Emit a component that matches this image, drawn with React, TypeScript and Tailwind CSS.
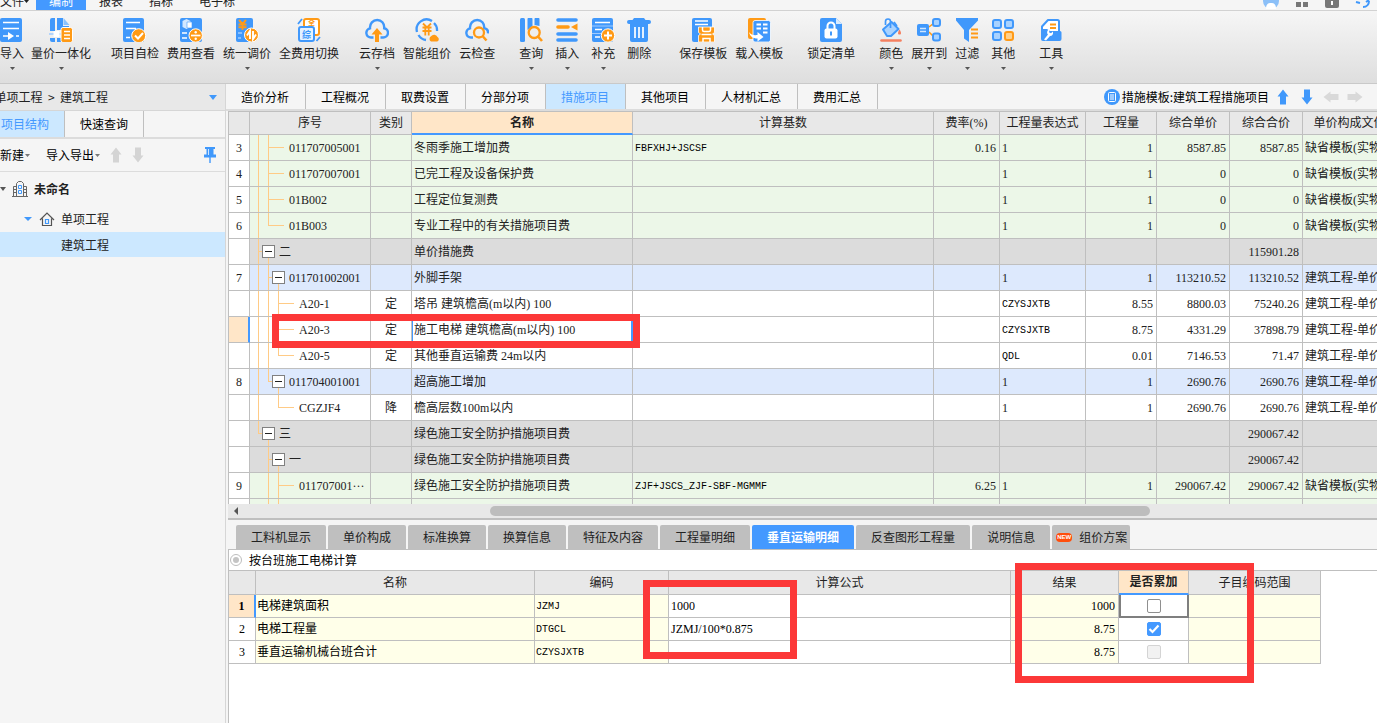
import { useState } from "react";
import type { ReactNode } from "react";
import clsx from "clsx";

const B = "#4098fb";
const O = "#ff9a16";

/* ---------- toolbar icons ---------- */

function Icon({ children }: { children: ReactNode }) {
  return (
    <svg viewBox="0 0 24 24" className="h-6 w-6 shrink-0" fill="none" aria-hidden="true">
      {children}
    </svg>
  );
}

const CLOUD = "M8.5 19.5H6a4.6 4.6 0 0 1-1-9.1C4.6 5.6 8 2 12.2 2s7.4 3.4 7 8.2a4.7 4.7 0 0 1-1.2 9.3h-2.5";

const ICONS: Record<string, ReactNode> = {
  import: (
    <Icon>
      <rect x="0" y="0" width="22" height="24" rx="2" fill={B} />
      <path d="M3 4.5h16M3 10.500h16M3 18h6M16 18h3" stroke="#fff" strokeWidth="1.600" />
      <path d="M8 14l6 4-6 4z" fill="#fff" />
    </Icon>
  ),
  merge: (
    <Icon>
      <path d="M1 2a2 2 0 0 1 2-2h3v13H1zM1 20h5v4H3a2 2 0 0 1-2-2zM8 0h6v8h6v4H8zM8 20h5v4H8z" fill={B} />
      <path d="M14.5 0l6 7h-6z" fill="#8cc3ff" />
      <path d="M0 16h12" stroke="#9fcbff" strokeWidth="1.5" />
      <rect x="4.5" y="13" width="6" height="6" rx="1" fill="#fff" />
      <rect x="12" y="9.5" width="11.5" height="15" rx="2" fill={O} stroke="#fff" />
      <path d="M15 13.5h6M15 17h6M15 20.5h6" stroke="#fff" strokeWidth="1.5" />
    </Icon>
  ),
  check: (
    <Icon>
      <rect x="0" y="0" width="21" height="24" rx="2" fill={B} />
      <path d="M3 4.5h14M3 10.5h10M3 19.5h4" stroke="#fff" strokeWidth="1.6" />
      <circle cx="15.7" cy="17.7" r="7" fill={O} stroke="#fff" />
      <path d="M12 17.5l3 3 5-5.5" stroke="#fff" strokeWidth="2" />
    </Icon>
  ),
  cost: (
    <Icon>
      <rect x="1" y="0" width="22" height="24" rx="2" fill={B} />
      <path d="M3.5 3l4-2 4 2v6l-4 2-4-2z" fill="#d3e8ff" />
      <path d="M8 4h5v6H8z" fill="#fff" stroke={B} strokeWidth=".6" />
      <path d="M3 15h5M3 20h5" stroke="#fff" strokeWidth="1.6" />
      <circle cx="16.7" cy="17.5" r="6.7" fill={O} stroke="#fff" />
      <path d="M12 17.5h9.5" stroke="#fff" strokeWidth="1.7" />
      <circle cx="16.7" cy="14.3" r="1.2" fill="#fff" />
      <circle cx="16.7" cy="20.7" r="1.2" fill="#fff" />
    </Icon>
  ),
  adjust: (
    <Icon>
      <rect x="1" y="0" width="17" height="24" rx="2" fill={B} />
      <path d="M4 2l3.5 4L11 2M7.500 6v6M3.500 6.500h8M3.500 9.300h8" stroke={O} strokeWidth="1.9" />
      <path d="M3 15h4M3 20h3" stroke="#9fcbff" strokeWidth="1.6" />
      <circle cx="16.5" cy="17" r="7" fill={O} stroke="#fff" />
      <path d="M15 21v-8l-3 4.5M18 13v8l3-4.5" stroke="#fff" strokeWidth="1.9" />
    </Icon>
  ),
  swap: (
    <Icon>
      <rect x="7" y="1" width="15" height="16" rx="2" fill="#fff" stroke={O} strokeWidth="2" />
      <text x="14.5" y="7" fontSize="7" fontWeight="700" textAnchor="middle" fill={O} fontFamily="Noto Sans CJK SC, sans-serif">
        全
      </text>
      <path d="M1 6l4-5M19.500 23l3.500-4" stroke={B} strokeWidth="1.8" />
      <rect x="2" y="9" width="15" height="14" rx="2" fill="#e6f2ff" stroke={B} strokeWidth="2" />
      <text x="9.5" y="19.5" fontSize="9" fontWeight="700" textAnchor="middle" fill={B} fontFamily="Noto Sans CJK SC, sans-serif">
        综
      </text>
    </Icon>
  ),
  cloudSave: (
    <Icon>
      <path d={CLOUD} stroke={B} strokeWidth="2.4" />
      <path d="M12 10l5.500 6.500H14V24h-4v-7.500H6.500z" fill={O} />
    </Icon>
  ),
  smart: (
    <Icon>
      <path d="M11 22a10 10 0 0 1-7.500-5M2 14A10 10 0 0 1 17 3M19 5a10 10 0 0 1 3 8" stroke={B} strokeWidth="2.3" />
      <path d="M8 5.500l4 4 4-4M7.500 9.500h9M7.500 13h9M10.300 9.500v8M13.700 9.500v8" stroke={O} strokeWidth="1.8" />
      <path d="M16 23.500a3 3 0 0 1 0-5.200 3.800 3.800 0 0 1 6.500.7c2 1.200 1.500 4.200-.5 4.500z" fill={O} />
    </Icon>
  ),
  cloudCheck: (
    <Icon>
      <path d="M8 19.5H6a4.6 4.6 0 0 1-1-9.1C4.6 5.6 8 2 12.2 2s7.4 3.4 7 8.2c2.600.4 4.100 2.600 3.800 5.300" stroke={B} strokeWidth="2.4" />
      <circle cx="14" cy="14.5" r="5" stroke={O} strokeWidth="2.3" />
      <path d="M17.500 18l4 4.500" stroke={O} strokeWidth="2.5" />
    </Icon>
  ),
  query: (
    <Icon>
      <rect x="1" y="0" width="5" height="24" rx="1.5" fill={B} />
      <path d="M8.500 1.500a1.500 1.500 0 0 1 5 0V8l-5 4zM15.500 1.500a1.500 1.500 0 0 1 5 0V8l-5-1z" fill={B} />
      <circle cx="15.2" cy="14.5" r="5.5" fill="#eee" stroke={O} strokeWidth="2.3" />
      <path d="M19 18.500l4 4.500" stroke={O} strokeWidth="2.6" />
    </Icon>
  ),
  insert: (
    <Icon>
      <path d="M3 2h18M3 16h18M3 22h18" stroke={B} strokeWidth="3.6" strokeLinecap="round" />
      <path d="M3 9h10" stroke={O} strokeWidth="3.6" strokeLinecap="round" />
      <path d="M22.500 5.500v7L16 9z" fill={O} />
    </Icon>
  ),
  supply: (
    <Icon>
      <rect x="1" y="0" width="21" height="24" rx="2" fill={B} />
      <path d="M4 4.500h15M4 11.500h7M4 19h5" stroke="#fff" strokeWidth="1.6" />
      <path d="M1 8h21M1 15.500h9" stroke="#9fcbff" />
      <circle cx="17" cy="17.5" r="6.7" fill={O} stroke="#fff" />
      <path d="M13 17.500h8M17 13.500v8" stroke="#fff" strokeWidth="2" />
    </Icon>
  ),
  remove: (
    <Icon>
      <path d="M7 0h10l1.500 2H22a1.500 1.500 0 0 1 0 4H2a1.500 1.500 0 0 1 0-4h3.500zM3 5h18v17a2 2 0 0 1-2 2H5a2 2 0 0 1-2-2z" fill={B} />
      <path d="M8 9v11M12 9v11M16 9v11" stroke="#fff" strokeWidth="1.7" />
    </Icon>
  ),
  saveTpl: (
    <Icon>
      <rect x="1" y="0" width="20" height="24" rx="2" fill={B} />
      <path d="M4 3h13M4 6.500h13" stroke="#fff" strokeWidth="1.5" />
      <path d="M7.500 9h16v5.500l-2 1.500 2 1.500V24h-16v-6.500l2-1.500-2-1.500z" fill={O} stroke="#fff" strokeWidth=".8" />
      <path d="M11.500 9v3a1.500 1.500 0 0 0 1.500 1.500h5a1.500 1.500 0 0 0 1.500-1.500V9M10.500 16.500h10M12 24v-3.500h7V24" stroke="#fff" strokeWidth="1.5" />
    </Icon>
  ),
  loadTpl: (
    <Icon>
      <rect x="1" y="0" width="18" height="21" rx="2" fill={O} />
      <rect x="6" y="2.5" width="17.5" height="21.5" rx="2" fill={B} stroke="#fff" strokeWidth=".8" />
      <path d="M9.500 6.500h4.500M16 6.500h4.500M9.500 10.500h4.500M16 10.500h4.500M16 14.500h4.500" stroke="#fff" strokeWidth="2.2" />
      <path d="M2 14c2 3 5 3.500 8.500 3v-3l6 5-6 4.500V20.500C6 20.500 3 18.500 2 14z" fill="#fff" />
    </Icon>
  ),
  lock: (
    <Icon>
      <path d="M3 0h14l6 6v16a2 2 0 0 1-2 2H3a2 2 0 0 1-2-2V2a2 2 0 0 1 2-2z" fill={B} />
      <path d="M17 0l6 6h-6z" fill="#d9ebff" />
      <path d="M8.500 11V8a3.500 3.500 0 0 1 7 0v3" stroke="#fff" strokeWidth="2" />
      <rect x="5.5" y="10.5" width="13" height="10" rx="2" fill="#fff" />
      <path d="M12 13.500v4" stroke={B} strokeWidth="2" />
    </Icon>
  ),
  color: (
    <Icon>
      <path d="M4 11.500L12.500 4l7 7-7.500 7H8z" fill="#a8d2ff" stroke={B} strokeWidth="2" strokeLinejoin="round" />
      <path d="M6.500 7V3.500a2.500 2.500 0 0 1 5 0V10M15 4l3 4" stroke={B} strokeWidth="1.7" />
      <path d="M20.500 11.500c2 3 2 5 0 5s-2-2 0-5z" fill="#f58060" />
      <path d="M2.500 22.500h19" stroke="#f58060" strokeWidth="2.6" strokeLinecap="round" />
    </Icon>
  ),
  expand: (
    <Icon>
      <path d="M12 9l5-4M12 14l5 5" stroke={O} strokeWidth="1.5" />
      <rect x="0" y="6" width="12" height="12" rx="2" fill={B} />
      <path d="M3 10.500h6M3 13.500h6" stroke="#cfe6ff" strokeWidth="1.4" />
      <rect x="16" y="1" width="7" height="7" rx="2" fill="#a8d2ff" stroke={B} strokeWidth="2" />
      <rect x="16" y="15.5" width="7" height="7" rx="2" fill="#a8d2ff" stroke={B} strokeWidth="2" />
    </Icon>
  ),
  filter: (
    <Icon>
      <path d="M1 0h22v2.500L14 12v12l-5-3.500V12L1 2.500z" fill={B} />
      <path d="M16 11.500h7M16 15.500h7M16 19.500h7" stroke={O} strokeWidth="2" />
    </Icon>
  ),
  other: (
    <Icon>
      <rect x="2" y="2" width="8" height="8" rx="2" fill="#a8d2ff" stroke={B} strokeWidth="2" />
      <rect x="14" y="2" width="8" height="8" rx="2" fill="#a8d2ff" stroke={B} strokeWidth="2" />
      <rect x="2" y="14" width="8" height="8" rx="2" fill="#a8d2ff" stroke={B} strokeWidth="2" />
      <rect x="14" y="14" width="8" height="8" rx="2" fill="#ffd08a" stroke={O} strokeWidth="2" />
    </Icon>
  ),
  tools: (
    <Icon>
      <path d="M3 13V8.500L9 2h9.500a1.500 1.500 0 0 1 1.500 1.500V13" fill="#fff" stroke={B} strokeWidth="2" strokeLinejoin="round" />
      <path d="M11 6.500h6M11 10h6" stroke={O} strokeWidth="1.8" />
      <path d="M2 11h6l3 2h10a1.500 1.500 0 0 1 1.500 1.500V21a2 2 0 0 1-2 2H4a2 2 0 0 1-2-2z" fill={B} />
      <path d="M5 21.500l4-5c-1.500-1.500-1-4.500 1.200-5v3l1.800.8 2-1.800c.5 3-1 4.500-3 4.500L7 22.500z" fill="#fff" />
    </Icon>
  ),
};

type Tool = { icon: string; label: string; menu?: boolean };

const TOOL_GROUPS: { className: string; items: Tool[] }[] = [
  { className: "gap-[7px]", items: [{ icon: "import", label: "导入", menu: true }, { icon: "merge", label: "量价一体化", menu: true }] },
  {
    className: "ml-5 gap-2",
    items: [
      { icon: "check", label: "项目自检" },
      { icon: "cost", label: "费用查看" },
      { icon: "adjust", label: "统一调价", menu: true },
      { icon: "swap", label: "全费用切换" },
    ],
  },
  {
    className: "ml-5 gap-2",
    items: [
      { icon: "cloudSave", label: "云存档", menu: true },
      { icon: "smart", label: "智能组价" },
      { icon: "cloudCheck", label: "云检查" },
    ],
  },
  {
    className: "ml-6 gap-3",
    items: [
      { icon: "query", label: "查询", menu: true },
      { icon: "insert", label: "插入", menu: true },
      { icon: "supply", label: "补充", menu: true },
      { icon: "remove", label: "删除" },
    ],
  },
  { className: "ml-7 gap-2", items: [{ icon: "saveTpl", label: "保存模板" }, { icon: "loadTpl", label: "载入模板" }] },
  { className: "ml-6", items: [{ icon: "lock", label: "锁定清单" }] },
  {
    className: "ml-6 gap-2",
    items: [
      { icon: "color", label: "颜色", menu: true },
      { icon: "expand", label: "展开到", menu: true },
      { icon: "filter", label: "过滤", menu: true },
    ],
  },
  { className: "ml-3", items: [{ icon: "other", label: "其他", menu: true }] },
  { className: "ml-6", items: [{ icon: "tools", label: "工具", menu: true }] },
];

function Caret({ className }: { className?: string }) {
  return (
    <svg viewBox="0 0 8 4" preserveAspectRatio="none" className={clsx("shrink-0", className)} fill="currentColor" aria-hidden="true">
      <path d="M0 0h8L4 4z" />
    </svg>
  );
}

function Arrow({ dir, className }: { dir: "up" | "down" | "left" | "right"; className?: string }) {
  const turn = { up: "rotate-0", down: "rotate-180", left: "-rotate-90", right: "rotate-90" }[dir];
  return (
    <svg viewBox="0 0 16 16" className={clsx("h-4 w-4", turn, className)} fill="currentColor" aria-hidden="true">
      <path d="M8 .5l5.500 7H11v8H5v-8H2.500z" />
    </svg>
  );
}

/* ---------- top bars ---------- */

const MENUS = ["编制", "报表", "指标", "电子标"];

function MenuBar() {
  return (
    <nav className="flex h-[11px] items-end overflow-hidden border-b border-[#d2d2d2] bg-[#f5f5f5] text-[#222]">
      <button className="flex h-[18px] w-9 items-center leading-[18px]">
        文件
        <Caret className="h-[3px] w-[5px]" />
      </button>
      {MENUS.map((m) => (
        <button
          key={m}
          className={clsx("h-[18px] px-[13px] leading-[18px]", m === "编制" && "bg-[#4499ff] text-white")}
        >
          {m}
        </button>
      ))}
      <div className="ml-auto flex h-[18px] items-center gap-4 pr-1.5 text-[#888]">
        <svg viewBox="0 0 16 16" className="h-4 w-4" aria-hidden="true">
          <circle cx="8" cy="8" r="8" fill="#8cc0f8" />
          <path d="M3 16c0-5 2-6 5-6s5 1 5 6z" fill="#fff" />
        </svg>
        <svg viewBox="0 0 14 14" className="h-3.5 w-3.5" fill="#777" aria-hidden="true">
          <path d="M1 0h5v6H1zM8 0h5v6H8zM1 8h5v5H1zM8 8h5v5H8z" />
        </svg>
        <svg viewBox="0 0 14 14" className="h-3.5 w-3.5" aria-hidden="true">
          <rect width="14" height="14" rx="2" fill="#777" />
          <path d="M7 7v4" stroke="#fff" strokeWidth="2" />
        </svg>
        <svg viewBox="0 0 16 16" className="h-4 w-4" fill="none" stroke={B} strokeWidth="2" aria-hidden="true">
          <path d="M1 9l4 1M8 14c4 0 6-3 6-6M11 9l3-2" />
        </svg>
      </div>
    </nav>
  );
}

function Ribbon() {
  return (
    <div className="flex h-[73px] items-start border-b border-[#c9c9c9] bg-linear-to-b from-[#f6f6f6] to-[#dedede] pt-[7px]">
      {TOOL_GROUPS.map((g, i) => (
        <div key={i} className={clsx("flex shrink-0 items-start", g.className)}>
          {g.items.map((t) => (
            <button key={t.label} className="flex flex-col items-center whitespace-nowrap text-[#222]">
              {ICONS[t.icon]}
              <span className="mt-[3px] leading-4">{t.label}</span>
              {t.menu && <Caret className="mt-1.5 h-[3px] w-[5px] text-[#555]" />}
            </button>
          ))}
        </div>
      ))}
    </div>
  );
}

/* ---------- project tree ---------- */

function Sidebar() {
  return (
    <aside className="flex w-[226px] shrink-0 flex-col border-r border-[#d6d6d6] bg-[#f5f5f5] text-[#222]">
      <button className="flex h-[27px] items-center justify-between border-b border-[#d6d6d6] bg-[#e8e8e8] pr-2">
        <span className="flex w-[108px] justify-end overflow-hidden whitespace-nowrap">
          <span className="shrink-0">单项工程 &nbsp;&gt;&nbsp; 建筑工程</span>
        </span>
        <Caret className="h-[5px] w-2 text-[#4098fb]" />
      </button>
      <div className="flex h-7 border-b-2 border-[#dcdcdc]">
        <button className="w-[65px] border-r border-[#bfbfbf] bg-[#cce8ff] pr-3.5 text-[#4499ff]">项目结构</button>
        <button className="w-[79px] border-r border-[#bfbfbf] text-black">快速查询</button>
      </div>
      <div className="flex h-[33px] items-center border-b border-[#dcdcdc] text-black">
        <button className="flex items-center gap-px">
          新建
          <Caret className="h-[3px] w-[5px] text-[#777]" />
        </button>
        <button className="ml-4 flex items-center gap-px">
          导入导出
          <Caret className="h-[3px] w-[5px] text-[#777]" />
        </button>
        <button aria-label="上移" className="ml-2 text-[#d4d4d4]">
          <Arrow dir="up" />
        </button>
        <button aria-label="下移" className="ml-1.5 text-[#d4d4d4]">
          <Arrow dir="down" />
        </button>
        <button aria-label="固定" className="mr-2 ml-auto">
          <svg viewBox="0 0 14 16" className="h-4 w-3.5" fill={B} aria-hidden="true">
            <path d="M2 0h10v2h-1.500v5.500H13v3H7.700V16H6.300v-5.500H1v-3h2.500V2H2z" />
            <path d="M5.500 2v6" stroke="#cfe5ff" />
          </svg>
        </button>
      </div>
      <ul>
        <li className="flex h-[34px] items-center font-bold">
          <Caret className="h-1 w-1.5 text-[#555]" />
          <svg viewBox="0 0 16 16" className="ml-1.5 h-4 w-4" fill="none" stroke="#666" aria-hidden="true">
            <path d="M0 15.500h16M4.500 15V2.500l2-2h3l2 2V15M1.500 15V5.500h3M14.500 15V5.500h-3M2 8.500h2M2 11.500h2M12 8.500h2M12 11.500h2" />
            <path d="M6.500 4.500h3v3h-3zM6.500 9.500h3v3h-3z" stroke={B} />
          </svg>
          <span className="ml-1.5">未命名</span>
        </li>
        <li className="flex h-[26px] items-center pl-6">
          <Caret className="h-1 w-2 text-[#4098fb]" />
          <svg viewBox="0 0 16 16" className="ml-[7px] h-4 w-4" fill="none" stroke="#555" strokeWidth="1.2" aria-hidden="true">
            <path d="M1 9l7-7 7 7M3.500 7.500v7h9v-7" />
            <path d="M6.500 8.500h3v4h-3z" stroke={B} />
          </svg>
          <span className="ml-1.5">单项工程</span>
        </li>
        <li className="flex h-[25px] items-center bg-[#cce8ff] pl-[61px]">建筑工程</li>
      </ul>
    </aside>
  );
}

/* ---------- measures grid ---------- */

const SECTION_TABS = ["造价分析", "工程概况", "取费设置", "分部分项", "措施项目", "其他项目", "人材机汇总", "费用汇总"];

function SectionTabs() {
  const [active, setActive] = useState("措施项目");
  return (
    <div className="flex h-[27px] border-b-2 border-[#dcdcdc] bg-[#f5f5f5] whitespace-nowrap text-black">
      {SECTION_TABS.map((t) => (
        <button
          key={t}
          onClick={() => setActive(t)}
          className={clsx(
            "border-r border-[#bfbfbf] pr-4 pl-[15px]",
            t === active && "bg-[#cce8ff] text-[#4499ff]"
          )}
        >
          {t}
        </button>
      ))}
      <div className="ml-auto flex items-center pr-3.5">
        <svg viewBox="0 0 16 16" className="h-4 w-4" fill="none" aria-hidden="true">
          <circle cx="8" cy="8" r="8" fill={B} />
          <rect x="4.5" y="3.5" width="7" height="9" rx="1" stroke="#fff" />
          <path d="M6 6h4M6 8h4M6 10h4" stroke="#fff" />
        </svg>
        <span className="ml-0.5">措施模板:建筑工程措施项目</span>
        <button aria-label="上移" className="ml-1.5 text-[#4098fb]">
          <Arrow dir="up" />
        </button>
        <button aria-label="下移" className="ml-2 text-[#4098fb]">
          <Arrow dir="down" />
        </button>
        <button aria-label="升级" className="ml-2 text-[#d9d9d9]">
          <Arrow dir="left" />
        </button>
        <button aria-label="降级" className="ml-2 text-[#d9d9d9]">
          <Arrow dir="right" />
        </button>
      </div>
    </div>
  );
}

// full / half / down: x of the guide lines that cross, end in or start from a row
type Guides = { full?: number[]; half?: number[]; down?: number[]; stub?: [number, number] };

type Row = {
  no?: string;
  code: string;
  tone: "green" | "gray" | "blue" | "white";
  pad: "box1" | "box2" | "leaf1" | "leaf2";
  guides: Guides;
  kind?: string;
  name?: string;
  base?: string;
  rate?: string;
  expr?: string;
  qty?: string;
  price?: string;
  total?: string;
  file?: string;
  selected?: boolean;
};

const TPL = "缺省模板(实物量";
const UNIT = "建筑工程-单价措施";

const ROWS: Row[] = [
  { no: "3", code: "011707005001", tone: "green", pad: "leaf1", guides: { full: [8, 18], stub: [18, 34] }, name: "冬雨季施工增加费", base: "FBFXHJ+JSCSF", rate: "0.16", expr: "1", qty: "1", price: "8587.85", total: "8587.85", file: TPL },
  { no: "4", code: "011707007001", tone: "green", pad: "leaf1", guides: { full: [8, 18], stub: [18, 34] }, name: "已完工程及设备保护费", expr: "1", qty: "1", price: "0", total: "0", file: TPL },
  { no: "5", code: "01B002", tone: "green", pad: "leaf1", guides: { full: [8, 18], stub: [18, 34] }, name: "工程定位复测费", expr: "1", qty: "1", price: "0", total: "0", file: TPL },
  { no: "6", code: "01B003", tone: "green", pad: "leaf1", guides: { full: [8], half: [18], stub: [18, 34] }, name: "专业工程中的有关措施项目费", expr: "1", qty: "1", price: "0", total: "0", file: TPL },
  { code: "二", tone: "gray", pad: "box1", guides: { full: [8], down: [18], stub: [8, 12] }, name: "单价措施费", total: "115901.28" },
  { no: "7", code: "011701002001", tone: "blue", pad: "box2", guides: { full: [8, 18], down: [28], stub: [18, 22] }, name: "外脚手架", expr: "1", qty: "1", price: "113210.52", total: "113210.52", file: UNIT },
  { code: "A20-1", tone: "white", pad: "leaf2", guides: { full: [8, 18, 28], stub: [28, 44] }, kind: "定", name: "塔吊 建筑檐高(m以内) 100", expr: "CZYSJXTB", qty: "8.55", price: "8800.03", total: "75240.26", file: UNIT },
  { code: "A20-3", tone: "white", pad: "leaf2", guides: { full: [8, 18, 28], stub: [28, 44] }, kind: "定", name: "施工电梯 建筑檐高(m以内) 100", expr: "CZYSJXTB", qty: "8.75", price: "4331.29", total: "37898.79", file: UNIT, selected: true },
  { code: "A20-5", tone: "white", pad: "leaf2", guides: { full: [8, 18], half: [28], stub: [28, 44] }, kind: "定", name: "其他垂直运输费 24m以内", expr: "QDL", qty: "0.01", price: "7146.53", total: "71.47", file: UNIT },
  { no: "8", code: "011704001001", tone: "blue", pad: "box2", guides: { full: [8], half: [18], down: [28], stub: [18, 22] }, name: "超高施工增加", expr: "1", qty: "1", price: "2690.76", total: "2690.76", file: UNIT },
  { code: "CGZJF4", tone: "white", pad: "leaf2", guides: { full: [8], half: [28], stub: [28, 44] }, kind: "降", name: "檐高层数100m以内", expr: "1", qty: "1", price: "2690.76", total: "2690.76", file: UNIT },
  { code: "三", tone: "gray", pad: "box1", guides: { half: [8], down: [18], stub: [8, 12] }, name: "绿色施工安全防护措施项目费", total: "290067.42" },
  { code: "一", tone: "gray", pad: "box2", guides: { full: [18], down: [28], stub: [18, 22] }, name: "绿色施工安全防护措施项目费", total: "290067.42" },
  { no: "9", code: "011707001···", tone: "green", pad: "leaf2", guides: { full: [18, 28], stub: [28, 44] }, name: "绿色施工安全防护措施项目费", base: "ZJF+JSCS_ZJF-SBF-MGMMF", rate: "6.25", expr: "1", qty: "1", price: "290067.42", total: "290067.42", file: TPL },
  { code: "", tone: "green", pad: "leaf2", guides: { full: [18, 28] } },
];

const TONES = { green: "bg-[#ecf7e8]", gray: "bg-[#dcdcdc]", blue: "bg-[#dde9fd]", white: "bg-white" };
const PADS = { box1: "pl-3", box2: "pl-[22px]", leaf1: "pl-[39px]", leaf2: "pl-[49px]" };

const CELL = "border-r border-b border-[#bfbfbf] p-0 whitespace-nowrap overflow-hidden";
const HEAD = "border-r border-b border-[#bfbfbf] bg-[#e8e8e8] p-0 font-normal whitespace-nowrap";
const HEAD_ON = "border-r border-b-2 border-r-[#bfbfbf] border-b-[#4499ff] bg-[#ffe6c8] p-0 font-bold whitespace-nowrap";
const GRID_FONT = "font-['Liberation_Serif','Noto_Sans_CJK_SC',serif]";

// letter codes are set in a fixed pitch, plain numbers keep the grid face
function Code({ value = "" }: { value?: string }) {
  if (!/^[A-Z]+([-+_][A-Z]+)*$/.test(value)) return <>{value}</>;
  return <span className="font-['Liberation_Mono',monospace] text-[10px] text-black">{value}</span>;
}

function TreeLines({ full = [], half = [], down = [], stub }: Guides) {
  return (
    <svg
      viewBox="0 0 60 26"
      shapeRendering="crispEdges"
      className="absolute top-0 left-0 h-[26px] w-[60px]"
      stroke="#ffcb86"
      aria-hidden="true"
    >
      {full.map((x) => (
        <path key={x} d={`M${x + 0.5} 0v26`} />
      ))}
      {half.map((x) => (
        <path key={x} d={`M${x + 0.5} 0v13`} />
      ))}
      {down.map((x) => (
        <path key={x} d={`M${x + 0.5} 18v8`} />
      ))}
      {stub && <path d={`M${stub[0]} 12.5H${stub[1]}`} />}
    </svg>
  );
}

function MeasureGrid() {
  return (
    <div className="relative h-[393px] shrink-0 overflow-hidden border-t border-l border-[#bfbfbf]">
      <table className={clsx("w-[1168px] table-fixed border-separate border-spacing-0 text-[#222]", GRID_FONT)}>
        <colgroup>
          <col className="w-[21px]" />
          <col className="w-[121px]" />
          <col className="w-[41px]" />
          <col className="w-[221px]" />
          <col className="w-[301px]" />
          <col className="w-[66px]" />
          <col className="w-[86px]" />
          <col className="w-[71px]" />
          <col className="w-[73px]" />
          <col className="w-[73px]" />
          <col className="w-[94px]" />
        </colgroup>
        <thead>
          <tr className="h-[23px]">
            <th className={HEAD} />
            <th className={HEAD}>序号</th>
            <th className={HEAD}>类别</th>
            <th className={HEAD_ON}>名称</th>
            <th className={HEAD}>计算基数</th>
            <th className={HEAD}>费率(%)</th>
            <th className={HEAD}>工程量表达式</th>
            <th className={HEAD}>工程量</th>
            <th className={HEAD}>综合单价</th>
            <th className={HEAD}>综合合价</th>
            <th className={HEAD}>单价构成文件</th>
          </tr>
        </thead>
        <tbody>
          {ROWS.map((r, i) => (
            <tr key={i} className={clsx("h-[26px]", TONES[r.tone])}>
              <td
                className={clsx(
                  "border-b border-[#bfbfbf] p-0 text-center",
                  r.selected ? "border-r-2 border-r-[#4499ff] bg-[#ffe6c8]" : "border-r bg-white"
                )}
              >
                {r.no}
              </td>
              <td className={CELL}>
                <div className={clsx("relative flex h-[25px] items-center gap-1", PADS[r.pad])}>
                  <TreeLines {...r.guides} />
                  {r.pad.startsWith("box") && (
                    <button
                      aria-label="折叠"
                      className="relative flex h-[13px] w-[13px] items-center justify-center border border-[#808080] bg-white"
                    >
                      <span className="h-px w-[7px] bg-[#222]" />
                    </button>
                  )}
                  <span className="relative">{r.code}</span>
                </div>
              </td>
              <td className={clsx(CELL, "text-center")}>{r.kind}</td>
              <td
                className={clsx(
                  r.selected
                    ? "border-r-2 border-b border-l border-x-[#4499ff] border-b-[#bfbfbf] p-0 pl-px whitespace-nowrap"
                    : [CELL, "pl-0.5"]
                )}
              >
                {r.name}
              </td>
              <td className={clsx(CELL, "pl-0.5")}>
                <Code value={r.base} />
              </td>
              <td className={clsx(CELL, "pr-[3px] text-right")}>{r.rate}</td>
              <td className={clsx(CELL, "pl-0.5")}>
                <Code value={r.expr} />
              </td>
              <td className={clsx(CELL, "pr-[3px] text-right")}>{r.qty}</td>
              <td className={clsx(CELL, "pr-[3px] text-right")}>{r.price}</td>
              <td className={clsx(CELL, "pr-[3px] text-right")}>{r.total}</td>
              <td className={clsx(CELL, "pl-0.5")}>{r.file}</td>
            </tr>
          ))}
        </tbody>
      </table>
      {/* callout around the selected row */}
      <div className="pointer-events-none absolute top-[202px] left-[43px] h-[34px] w-[368px] border-[7px] border-[#fc3838]" />
    </div>
  );
}

/* ---------- detail panel ---------- */

const DETAIL_TABS = ["工料机显示", "单价构成", "标准换算", "换算信息", "特征及内容", "工程量明细", "垂直运输明细", "反查图形工程量", "说明信息"];

const DETAILS = [
  { name: "电梯建筑面积", code: "JZMJ", formula: "1000", result: "1000" },
  { name: "电梯工程量", code: "DTGCL", formula: "JZMJ/100*0.875", result: "8.75" },
  { name: "垂直运输机械台班合计", code: "CZYSJXTB", formula: "", result: "8.75" },
];

function DetailTabs() {
  const [active, setActive] = useState("垂直运输明细");
  return (
    <div className="flex h-[30px] shrink-0 gap-0.5 border-b border-[#bfbfbf] bg-[#f5f5f5] pt-[5px] pl-2 whitespace-nowrap text-[#222]">
      {DETAIL_TABS.map((t) => (
        <button
          key={t}
          onClick={() => setActive(t)}
          className={clsx("rounded-t-[2px] px-[15px]", t === active ? "bg-[#4499ff] font-bold text-white" : "bg-[#bfbfbf]")}
        >
          {t}
        </button>
      ))}
      <button className="flex items-center gap-[7px] rounded-t-[2px] bg-[#bfbfbf] pr-[3px] pl-1">
        <span className="w-4 rounded-sm bg-[#ff4e0c] text-center font-['Liberation_Sans',sans-serif] text-[6px] leading-[9px] font-bold text-white">
          NEW
        </span>
        组价方案
      </button>
    </div>
  );
}

function DetailPanel() {
  const [checks, setChecks] = useState([false, true, false]);

  const toggle = (i: number) => setChecks(checks.map((c, k) => (k === i ? !c : c)));

  return (
    <section className="relative flex-1 border-l border-[#bfbfbf] bg-white text-black">
      <label className="flex h-5 items-center gap-[7px] pl-px">
        <input
          type="radio"
          name="mode"
          defaultChecked
          className="h-3 w-3 appearance-none rounded-full border border-[#bdbdbd] bg-[#c4c4c4] bg-clip-content p-0.5"
        />
        按台班施工电梯计算
      </label>
      <div className="overflow-hidden border-t border-[#bfbfbf]">
        <table className={clsx("w-[1092px] table-fixed border-separate border-spacing-0", GRID_FONT)}>
          <colgroup>
            <col className="w-[27px]" />
            <col className="w-[279px]" />
            <col className="w-[134px]" />
            <col className="w-[342px]" />
            <col className="w-[108px]" />
            <col className="w-[70px]" />
            <col className="w-[132px]" />
          </colgroup>
          <thead className="text-[#222]">
            <tr className="h-6">
              <th className={HEAD} />
              <th className={HEAD}>名称</th>
              <th className={HEAD}>编码</th>
              <th className={HEAD}>计算公式</th>
              <th className={HEAD}>结果</th>
              <th className={HEAD_ON}>是否累加</th>
              <th className={HEAD}>子目编码范围</th>
            </tr>
          </thead>
          <tbody>
            {DETAILS.map((d, i) => (
              <tr key={d.code} className="h-[23px] bg-[#ffffe9]">
                <td
                  className={clsx(
                    "border-b border-[#bfbfbf] p-0 text-center",
                    i === 0 ? "border-r-2 border-r-[#4499ff] bg-[#ffe6c8] font-bold" : "border-r bg-white"
                  )}
                >
                  {i + 1}
                </td>
                <td className={clsx(CELL, "pl-px")}>{d.name}</td>
                <td className={clsx(CELL, "pl-px")}>
                  <Code value={d.code} />
                </td>
                <td className={clsx(CELL, "bg-white pl-0.5")}>{d.formula}</td>
                <td className={clsx(CELL, "pr-[3px] text-right")}>{d.result}</td>
                <td className={clsx("bg-white p-0", i === 0 ? "border-2 border-t-0 border-[#7f7f7f]" : "border-r border-b border-[#bfbfbf]")}>
                  <div className="relative flex items-center justify-center">
                    <input
                      type="checkbox"
                      aria-label={`${d.name} 是否累加`}
                      checked={checks[i]}
                      disabled={i === 2}
                      onChange={() => toggle(i)}
                      className="h-3.5 w-3.5 appearance-none rounded-[2px] border border-[#8f8f8f] bg-white checked:border-[#4499ff] checked:bg-[#4499ff] disabled:border-[#d4d4d4] disabled:bg-[#f2f2f2]"
                    />
                    {checks[i] && (
                      <svg viewBox="0 0 14 14" className="pointer-events-none absolute h-3.5 w-3.5" fill="none" aria-hidden="true">
                        <path d="M2.5 7l3 3 6-6.5" stroke="#fff" strokeWidth="2.2" />
                      </svg>
                    )}
                  </div>
                </td>
                <td className={CELL} />
              </tr>
            ))}
          </tbody>
        </table>
      </div>
      {/* callouts around the formula and result columns */}
      <div className="pointer-events-none absolute top-[30px] left-[414px] h-[79px] w-[154px] border-[7px] border-[#fc3838]" />
      <div className="pointer-events-none absolute top-[13px] left-[786px] h-[120px] w-[239px] border-[7px] border-[#fc3838]" />
    </section>
  );
}

export default function App() {
  return (
    <div className="flex h-screen flex-col overflow-hidden bg-[#f5f5f5] font-['Noto_Sans_CJK_SC',sans-serif] text-[12px] leading-4">
      <MenuBar />
      <Ribbon />
      <div className="flex min-h-0 flex-1">
        <Sidebar />
        <main className="flex min-w-0 flex-1 flex-col">
          <SectionTabs />
          <div className="flex min-h-0 flex-1 flex-col pl-0.5">
            <MeasureGrid />
            <div className="grid h-3.5 shrink-0 grid-cols-[262px_660fr_227fr] items-center bg-[#e8e8e8]">
              <button aria-label="向左滚动" className="justify-self-start pl-1 text-[#555]">
                <Caret className="h-1 w-2 rotate-90" />
              </button>
              <div className="h-2.5 rounded-full bg-[#bdbdbd]" />
            </div>
            <div className="h-0.5 shrink-0 bg-[#bfbfbf]" />
            <DetailTabs />
            <DetailPanel />
          </div>
        </main>
      </div>
    </div>
  );
}
